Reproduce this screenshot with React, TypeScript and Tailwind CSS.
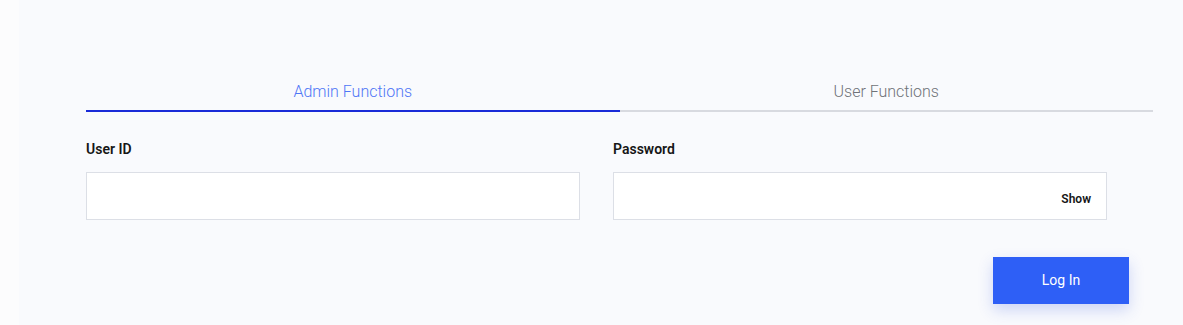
function App() {
  return (
    <div className="min-h-[325px] w-full bg-[#fcfcfd]" style={{ fontFamily: "Roboto, 'Liberation Sans', sans-serif" }}>
      <section className="ml-[19px] min-h-[325px] bg-[#f9fafd] pl-[67px] pr-[30px] pt-[80px]">
        <div className="flex">
          <button className="flex-1 border-b-2 border-[#1a2bd8] pb-[6px] text-center text-base font-light leading-6 text-[#4f76f6]">
            Admin Functions
          </button>
          <button className="flex-1 border-b-2 border-[#d8dae0] pb-[6px] text-center text-base font-light leading-6 text-[#6f7278]">
            User Functions
          </button>
        </div>

        <div className="mt-[27px] flex gap-[33px]">
          <div className="w-[494px]">
            <label className="block text-sm font-semibold leading-5 text-[#161616]">User ID</label>
            <input className="mt-[13px] h-[48px] w-full border border-[#dcdfe6] bg-white px-4 text-sm outline-none" />
          </div>
          <div className="w-[494px]">
            <label className="block text-sm font-semibold leading-5 text-[#161616]">Password</label>
            <div className="mt-[13px] flex h-[48px] w-full items-center border border-[#dcdfe6] bg-white pl-4 pr-[15px]">
              <input type="password" className="h-full flex-1 bg-transparent text-sm outline-none" />
              <span className="pt-[6px] text-xs font-semibold text-[#161616]">Show</span>
            </div>
          </div>
        </div>

        <div className="mt-[37px] flex justify-end pr-[24px]">
          <button className="h-[47px] w-[136px] bg-[#2e5ff6] pb-[2px] text-sm text-white shadow-[0_6px_14px_rgba(46,80,220,0.22)]">
            Log In
          </button>
        </div>
      </section>
    </div>
  );
}

export default App;
